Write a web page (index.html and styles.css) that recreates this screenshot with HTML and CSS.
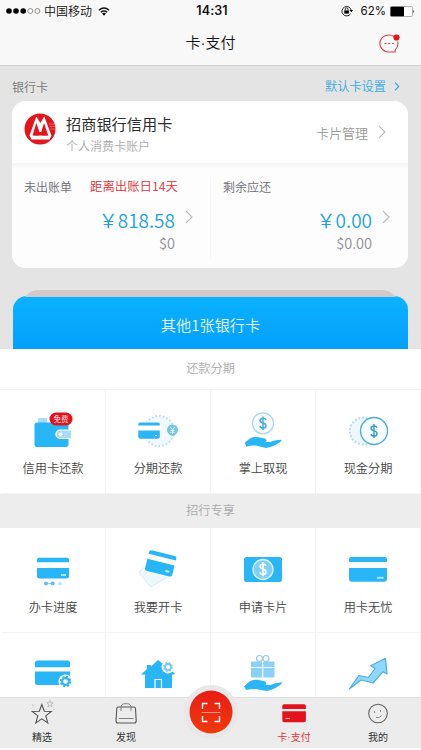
FILE: index.html
```html
<!DOCTYPE html>
<html lang="zh-CN">
<head>
<meta charset="utf-8">
<title>卡·支付</title>
<link rel="stylesheet" href="styles.css">
</head>
<body>
<div class="app">
  <header class="top">
    <div class="status">
      <div class="carrier">
        <svg width="35" height="8" viewBox="0 0 35 8"><g fill="#000"><circle cx="3" cy="4" r="2.8"/><circle cx="10" cy="4" r="2.8"/><circle cx="17.200" cy="4" r="2.8"/></g><g fill="none" stroke="#777" stroke-width=".8"><circle cx="24.300" cy="4" r="2.500"/><circle cx="31.400" cy="4" r="2.500"/></g></svg>
        <span>中国移动</span>
        <svg class="wifi" width="12" height="9" viewBox="0 0 12 9"><path d="M.8 3.200Q6-1.200 11.200 3.200M2.800 5.300Q6 2.700 9.200 5.300" fill="none" stroke="#111" stroke-width="1.300"/><path d="M4 6.500Q6 5 8 6.500L6 8.800Z"/></svg>
      </div>
      <div class="clock">14:31</div>
      <div class="power">
        <svg width="12" height="12" viewBox="0 0 12 12"><path d="M9.600 8.800A4.700 4.700 0 1 1 10.300 5.500" fill="none" stroke="#222"/><path d="M8.500 5h3.500l-1.700 2.300z"/><path d="M3.300 5.400h4.600v3.200H3.300z"/><path d="M4.200 5.500V4.300a1.400 1.400 0 0 1 2.800 0v1.200" fill="none" stroke="#222"/></svg>
        <span>62%</span>
        <svg width="25" height="11" viewBox="0 0 25 11"><rect x=".5" y=".5" width="22" height="10" rx="1.200" fill="#fff" stroke="#999" stroke-width=".8"/><rect x=".5" y=".7" width="13.500" height="9.600" rx=".8"/><path d="M23.300 3.800q1.500 1.700 0 3.400z"/></svg>
      </div>
    </div>
    <div class="nav">
      <h1>卡·支付</h1>
      <svg class="chat" width="22" height="20" viewBox="0 0 22 20"><path d="M15 2.500A9 8.500 0 1 0 10.500 18H16.200V15.800A9 8.500 0 0 0 18.600 7.500" fill="none" stroke="#dc3c4c" stroke-width="1.100"/><path d="M5.500 9.500h2M9.200 9.500h2M12.900 9.500h2" stroke="#dc3c4c" stroke-width="1.200"/><circle cx="17.500" cy="3.500" r="3.100" fill="#e51414"/></svg>
    </div>
  </header>

  <main class="content">
    <section class="cards">
      <div class="cards-head"><span>银行卡</span><a class="default-link">默认卡设置<svg width="6" height="9" viewBox="0 0 6 9"><path d="M1 .7 4.700 4.500 1 8.300" fill="none" stroke="#36a9dd" stroke-width="1.200"/></svg></a></div>
      <div class="card">
        <div class="card-head">
          <svg class="logo" width="32" height="32" viewBox="0 0 32 32"><circle cx="16" cy="16" r="15.500" fill="#e4151b"/><path d="M25 11h6.500M26 13.500h5.500M27 16h4.500" stroke="#fff" stroke-width=".6" opacity=".6"/><path d="M5.500 22.500 12.300 3.500 16.300 10 20.300 3.500 27.500 22.500H24.300L20 10 17.200 19H15.500L12.300 10 8.500 22.500ZM5.500 22.500H27.500L25.500 26.500H7.500Z" fill="#fff"/><path d="M10 22.500 12.400 13.500 15 22.500ZM18 22.500 20.200 13.500 23.300 22.500Z" fill="#e4151b"/></svg>
          <div class="card-name"><strong>招商银行信用卡</strong><small>个人消费卡账户</small></div>
          <span class="manage">卡片管理</span>
          <svg class="chevron" width="8" height="14" viewBox="0 0 8 14"><path d="M1 1 7 7 1 13" fill="none" stroke="#bbb" stroke-width="1.100"/></svg>
        </div>
        <div class="bills">
          <div class="bill">
            <div class="bill-label"><span>未出账单</span><em>距离出账日14天</em></div>
            <div class="amount"><b>￥818.58</b><svg width="8" height="14" viewBox="0 0 8 14"><path d="M1 1 7 7 1 13" fill="none" stroke="#bbb" stroke-width="1.100"/></svg></div>
            <div class="usd">$0</div>
          </div>
          <div class="bill due">
            <div class="bill-label"><span>剩余应还</span></div>
            <div class="amount"><b>￥0.00</b><svg width="8" height="14" viewBox="0 0 8 14"><path d="M1 1 7 7 1 13" fill="none" stroke="#bbb" stroke-width="1.100"/></svg></div>
            <div class="usd">$0.00</div>
          </div>
        </div>
      </div>
      <svg class="stack-edge" width="372" height="7" viewBox="0 0 372 7"><path d="M0 7Q5 0 13 0H357Q365 0 371 7z" fill="#cfcac8"/></svg>
      <div class="other">其他1张银行卡</div>
    </section>

    <h2 class="group-title">还款分期</h2>
    <div class="grid first">
      <div class="tile">
        <svg width="105" height="66" viewBox="0 0 105 66"><path d="M38 33v-4q0-1 1-1h8v5z" fill="#a5dcf8"/><rect x="34.500" y="32.500" width="34" height="24.500" rx="2.500" fill="#29b6f6"/><path d="M69 39.500h-9a4.700 4.700 0 0 0 0 9.400h9z" fill="#fff"/><path d="M71 40.500H60.500a3.700 3.700 0 0 0 0 7.400H71z" fill="#a5dcf8"/><circle cx="60.700" cy="44.200" r="1.800" fill="#fff"/><rect x="49.500" y="22.500" width="23" height="13" rx="6.500" fill="#e3121c"/><text x="61" y="31.600" class="badge-text">免费</text></svg>
        <span>信用卡还款</span>
      </div>
      <div class="tile">
        <svg width="105" height="66" viewBox="0 0 105 66"><circle cx="54" cy="41" r="15" fill="#f1f9fe"/><circle cx="54" cy="41" r="15" fill="none" stroke="#b5def4" stroke-width="2" stroke-dasharray="1.700 2"/><rect x="32" y="32" width="24" height="18" fill="#fff"/><path d="M33.300 35.500v-1.500q0-1.500 1.500-1.500h18.500q1.500 0 1.500 1.500v1.500zM33.300 40.500h21.500v6.300q0 2-2 2H35.300q-2 0-2-2z" fill="#29b6f6"/><path d="M50 45.500h2" stroke="#fff"/><path d="M62 40a5.500 5.500 0 0 1 11 0q0 2.500-3.500 5.500h-4Q62 42.500 62 40z" fill="#71c5ee"/><path d="M65.300 37 67.500 40 69.700 37M67.500 40v4M65.500 40.500h4M65.500 42.300h4" stroke="#e9f8ff" fill="none"/></svg>
        <span>分期还款</span>
      </div>
      <div class="tile">
        <svg width="105" height="66" viewBox="0 0 105 66"><circle cx="53" cy="33.300" r="10.500" fill="#fafdff" stroke="#a9d6f0" stroke-width="1.200"/><path d="M56 30q-.5-1.700-3-1.700-3 0-3 2.300 0 1.800 3 2.500t3 2.700q0 2.400-3 2.400-2.700 0-3-2M53 26.500v13.600" fill="none" stroke="#42aee3" stroke-width="1.500"/><path d="M34.800 52.500 40 48.500q3.500-2 8.500-1.200l6 1.200q2.500.5 2 2.500l-1 1h5q3.500-2 11-2.200.8.500-2 2.600-4.500 3.200-9 4.500l-4.500 1L46 55.500q-5-.5-9.600 1.300z" fill="#29b6f6"/></svg>
        <span>掌上取现</span>
      </div>
      <div class="tile">
        <svg width="105" height="66" viewBox="0 0 105 66"><circle cx="48" cy="41" r="13.500" fill="#edf8fe"/><path d="M52 54A13.500 13.500 0 1 1 52 28" fill="none" stroke="#a9d6f0" stroke-width="2" stroke-dasharray="1.700 2"/><circle cx="59" cy="41" r="13.500" fill="#f7fcff" stroke="#4fa9d6" stroke-width="1.300"/><path d="M62 37.700q-.5-1.800-3-1.800-3 0-3 2.400 0 1.800 3 2.600t3 2.800q0 2.400-3 2.400-2.700 0-3-2M59 34v14" fill="none" stroke="#389fcf" stroke-width="1.500"/></svg>
        <span>现金分期</span>
      </div>
    </div>

    <h2 class="group-title gray">招行专享</h2>
    <div class="grid">
      <div class="tile">
        <svg width="105" height="67" viewBox="0 0 105 67"><path d="M37 34.200v-2.500q0-2 2-2h28q2 0 2 2v2.500zM37 40h32v8q0 2.500-2.500 2.500h-27Q37 50.500 37 48z" fill="#29b6f6"/><path d="M61 47h5" stroke="#d7f1fd" stroke-width="1.500"/><path d="M46 55.500h6" stroke="#8ccff2"/><circle cx="46" cy="55.500" r="2" fill="#5fc1f1"/><circle cx="52.700" cy="55.500" r="2" fill="#5fc1f1"/><circle cx="60" cy="55.500" r="1.900" fill="#bfe5f8"/></svg>
        <span>办卡进度</span>
      </div>
      <div class="tile">
        <svg width="105" height="67" viewBox="0 0 105 67"><path d="M35 43 43 36 66 47 47 58q-1.500.8-2.500-.4L35 46q-1-1.500 0-3z" fill="#edf8fd" stroke="#c9e7f5" stroke-width=".8"/><g transform="rotate(14 55.500 36)"><rect x="40.500" y="25" width="29" height="22" fill="#fff"/><path d="M41.500 29v-2.200q0-2 2-2h24q2 0 2 2v2.200zM41.500 34h28v9.500q0 2.500-2.500 2.500h-23q-2.500 0-2.500-2.500z" fill="#29b6f6"/><path d="M62 41.500h4" stroke="#c8ecfd" stroke-width="2"/></g></svg>
        <span>我要开卡</span>
      </div>
      <div class="tile">
        <svg width="105" height="67" viewBox="0 0 105 67"><rect x="34" y="29" width="38" height="25" rx="2.500" fill="#29b6f6"/><circle cx="53" cy="41.500" r="10" fill="#7fcff7" stroke="#d9f3ff" stroke-width="1.300"/><path d="M56 38q-.5-1.800-3-1.800-3 0-3 2.400 0 1.800 3 2.600t3 2.800q0 2.400-3 2.400-2.700 0-3-2M53 34.300v14.200" fill="none" stroke="#fff" stroke-width="1.600"/></svg>
        <span>申请卡片</span>
      </div>
      <div class="tile">
        <svg width="105" height="67" viewBox="0 0 105 67"><path d="M34 34v-2.500Q34 29 36.500 29h33q2.500 0 2.500 2.500V34zM34 40h38v11q0 2.800-2.800 2.800H36.800Q34 53.800 34 51z" fill="#29b6f6"/><path d="M62 49.800h6.500" stroke="#a9e3fc" stroke-width="2"/></svg>
        <span>用卡无忧</span>
      </div>
      <div class="tile">
        <svg width="105" height="67" viewBox="0 0 105 67"><path d="M35 34.300v-4.500q0-2.200 2.200-2.200h30.600q2.200 0 2.200 2.200v4.500zM35 38.500h35v11q0 2.500-2.500 2.500h-30Q35 52 35 49.500z" fill="#29b6f6"/><circle cx="65.500" cy="48.500" r="7" fill="#fff"/><circle cx="65.500" cy="48.500" r="4.900" fill="none" stroke="#29b6f6" stroke-width="1.700" stroke-dasharray="2.100 1.750"/><circle cx="65.500" cy="48.500" r="3.400" fill="none" stroke="#35b5ef" stroke-width="2.200"/></svg>
      </div>
      <div class="tile">
        <svg width="105" height="67" viewBox="0 0 105 67"><path d="M36 41.500 42 36v-4h4v1.500l7-6.500 17 13.500-1 1h-2V55H40V41.500z" fill="#29b6f6"/><path d="M50 55v-8.500h6.500V55" fill="none" stroke="#fff" stroke-width="1.200"/><circle cx="63" cy="34" r="6.500" fill="#fff"/><circle cx="63" cy="34" r="4.200" fill="none" stroke="#8fd3f5" stroke-width="1.700" stroke-dasharray="1.800 1.500"/><circle cx="63" cy="34" r="3" fill="none" stroke="#78cbf2" stroke-width="1.800"/></svg>
      </div>
      <div class="tile">
        <svg width="105" height="67" viewBox="0 0 105 67"><rect x="41" y="28.500" width="23.500" height="16" rx="1" fill="#8bd1f5"/><path d="M41 34.500h23.500M52.700 28v17" stroke="#f0faff" stroke-width="1.200"/><g fill="#fff" stroke="#90cdec" stroke-width="1.200"><circle cx="49.500" cy="25.500" r="3"/><circle cx="56" cy="25.500" r="3"/></g><path d="M34 53.500 39.500 48.500q3-2.400 8-1.700l7 1.500q2.400.7 1.500 2.800l-1 1h6q3.500-2.200 11-2.800.8.500-2 2.800-4.500 3.500-9 5l-4.500 1L46 56q-5-.3-9.600 1z" fill="#29b6f6"/></svg>
      </div>
      <div class="tile">
        <svg width="105" height="67" viewBox="0 0 105 67"><path d="M34.300 56 44 42.500l9.500 2L60 35.500l-4.300-2.700L70.500 25.300 72 41l-4-2.300L58 50l-12-3z" fill="#90d8f9" stroke="#49afe0" stroke-width="1.200" stroke-linejoin="round"/></svg>
      </div>
    </div>
  </main>

  <nav class="tabs">
    <div class="tab"><svg width="32" height="28" viewBox="0 0 32 28"><path d="m15.800 6.500 2.500 6.800 7 .2-5.500 4.400 2 7-6-4-6 4 2-7-5.500-4.400 7-.2z" fill="none" stroke="#555" stroke-width="1.100"/><path d="m24 2.500.8 2.200h2.400l-1.800 1.600.6 2.500-2-1.400-2 1.400.6-2.500-1.800-1.600h2.400zM6.500 6.500l.5 2M27 11l1.500.5" fill="none" stroke="#aaa" stroke-width=".7"/></svg><span>精选</span></div>
    <div class="tab"><svg width="32" height="28" viewBox="0 0 32 28"><path d="M8.300 9h15.500q1.500 0 1.700 1.500l.7 12.500q0 2-2 2H8q-2 0-2-2L6.800 10.500Q7 9 8.300 9z" fill="none" stroke="#555" stroke-width="1.100"/><path d="M11 13V10q0-4.300 3.500-4.300h3Q21 5.700 21 10v3M9 20.500h14.500" fill="none" stroke="#777" stroke-width=".9"/></svg><span>发现</span></div>
    <div class="tab scan"><svg width="56" height="56" viewBox="0 0 56 56"><defs><linearGradient id="red" x2="0" y2="1"><stop stop-color="#e91c16"/><stop offset="1" stop-color="#f03a0c"/></linearGradient></defs><circle cx="28" cy="28" r="27" fill="#e8e8e8"/><circle cx="28" cy="28" r="21.500" fill="url(#red)"/><path d="M24.500 19.500h-5V25M31.500 19.500h5V25M24.500 37.500h-5V32M31.500 37.500h5V32" fill="none" stroke="#fff" stroke-width="1.400"/><path d="M18.500 28.500h19" stroke="#ff9a8c"/></svg></div>
    <div class="tab active"><svg width="32" height="28" viewBox="0 0 32 28"><path d="M4.300 11V8q0-1.800 1.800-1.800h20Q27.900 6.200 27.900 8v3zM4.300 13.200h23.600v9q0 2-2 2H6.300q-2 0-2-2z" fill="#e3131d"/><path d="M7.500 20.500h4.500" stroke="#f9a0a4" stroke-width="1.200"/></svg><span>卡·支付</span></div>
    <div class="tab"><svg width="32" height="28" viewBox="0 0 32 28"><circle cx="16" cy="15.500" r="9.300" fill="none" stroke="#666" stroke-width="1.100"/><path d="M12.500 13v2M18.500 12v2M14 19.500q3.500 1 5.500-2" fill="none" stroke="#888"/></svg><span>我的</span></div>
  </nav>
</div>
</body>
</html>
```

FILE: styles.css
```css
* { box-sizing: border-box; }
body {
  margin: 0;
  background: #fff;
  font-family: "Noto Sans CJK SC", sans-serif;
  font-weight: 350;
  color: #444;
}
svg { display: block; flex: none; }
h1, h2 { margin: 0; font-weight: 350; }

.app {
  width: 421px;
  height: 750px;
  display: flex;
  flex-direction: column;
  overflow: hidden;
}

.top { height: 66px; flex: none; background: #f8f8f8; border-bottom: 1px solid #cfcfcf; }
.status {
  height: 22px;
  display: grid;
  grid-template-columns: 1fr auto 1fr;
  align-items: center;
  padding: 0 6px;
  color: #111;
  font-size: 12px;
  line-height: 22px;
}
.carrier { display: flex; align-items: center; gap: 3px; }
.wifi { margin-left: 3px; }
.clock { font-family: Inter, sans-serif; font-weight: 600; font-size: 12.5px; letter-spacing: .1px; padding-left: 3px; }
.power { display: flex; align-items: center; justify-content: flex-end; gap: 4px; font-family: Inter, sans-serif; font-size: 11.5px; font-weight: 400; }
.power span { margin-left: 4px; }

.nav {
  height: 43px;
  display: grid;
  grid-template-columns: 1fr auto 1fr;
  align-items: center;
}
.nav h1 {
  grid-column: 2;
  font-family: "Liberation Sans", "Noto Sans CJK SC", sans-serif;
  font-size: 15px;
  line-height: 40px;
  padding-bottom: 2px;
  color: #151515;
}
.chat { justify-self: end; margin-right: 20px; }

.content { height: 631px; flex: none; overflow: hidden; }
.cards { height: 283px; background: #e4e4e4; padding: 0 13px 0 12px; }
.cards-head {
  height: 35px;
  display: flex;
  justify-content: space-between;
  align-items: center;
  padding-top: 5px;
  font-size: 12px;
  color: #777;
}
.default-link { display: flex; align-items: center; gap: 8px; color: #36a9dd; padding-right: 8px; font-size: 12.2px; }

.card { height: 167px; background: #fdfdfd; border-radius: 14px; overflow: hidden; }
.card-head {
  height: 62px;
  display: flex;
  align-items: center;
  padding: 0 22px 0 12px;
  background: #fff;
}
.logo { margin-top: -6px; }
.card-name { flex: 1; padding: 3px 0 0 10px; display: flex; flex-direction: column; }
.card-name strong { font-size: 15.2px; font-weight: 400; line-height: 23px; color: #2c2c2c; }
.card-name small { font-size: 12px; line-height: 21px; color: #aaa; }
.manage { font-size: 13px; color: #999; }
.chevron { margin-left: 10px; }

.bills {
  height: 105px;
  display: grid;
  grid-template-columns: 198px 198px;
  background: linear-gradient(#f3f3f3, #fdfdfd 6px);
  padding: 14px 0 10px;
}
.bill { padding: 0 17px 0 12px; }
.bill.due { border-left: 1px solid #f5f5f5; padding-right: 18px; }
.bill-label { display: flex; gap: 18px; font-size: 12px; line-height: 19px; color: #6c6c76; }
.bill-label em { font-style: normal; color: #df3035; font-size: 12.4px; }
.amount { display: flex; justify-content: flex-end; gap: 10px; padding-top: 9px; height: 41px; }
.amount b { font-size: 19px; font-weight: 350; line-height: 30px; color: #1da1dc; }
.amount svg { margin-top: 5px; }
.usd { text-align: right; padding-right: 18px; font-size: 14.5px; line-height: 20px; margin-top: -4px; color: #8f8f96; }

.stack-edge { margin: 22px 0 -1px 13px; }
.other {
  height: 53px;
  margin-left: 1px;
  border-radius: 14px 14px 0 0;
  background: linear-gradient(#0cb2ff, #03a0fa);
  color: #e8f8ff;
  font-size: 15.2px;
  line-height: 57px;
  text-align: center;
}

.group-title {
  height: 41px;
  font-size: 12.2px;
  line-height: 38px;
  text-align: center;
  color: #aaa;
  background: #fff;
  border-bottom: 1px solid #f2f2f2;
}
.group-title.gray { height: 34px; line-height: 33px; background: #ededed; border: 0; }

.grid {
  display: grid;
  grid-template-columns: repeat(4, 105px);
  grid-auto-rows: 105px;
  padding-left: 1px;
}
.first { grid-auto-rows: 104px; }
.tile {
  display: flex;
  flex-direction: column;
  align-items: center;
  border-right: 1px solid #f3f3f3;
  border-bottom: 1px solid #f3f3f3;
  font-size: 12.2px;
  line-height: 24px;
}
.tile svg { margin-left: -1px; }
.badge-text { font-size: 7.5px; fill: #fff; text-anchor: middle; }

.tabs {
  height: 51px;
  flex: none;
  display: grid;
  grid-template-columns: repeat(5, 84px);
  background: #ececec;
  border-top: 1px solid #e1e1e1;
}
.tab {
  display: flex;
  flex-direction: column;
  align-items: center;
  font-family: "Liberation Sans", "Noto Sans CJK SC", sans-serif;
  font-size: 10px;
  line-height: 20px;
  font-weight: 400;
  color: #333;
}
.tab span { margin-top: 2px; }
.scan svg { margin: -14px 0 0 1px; }
.active { color: #e0343c; }
```
